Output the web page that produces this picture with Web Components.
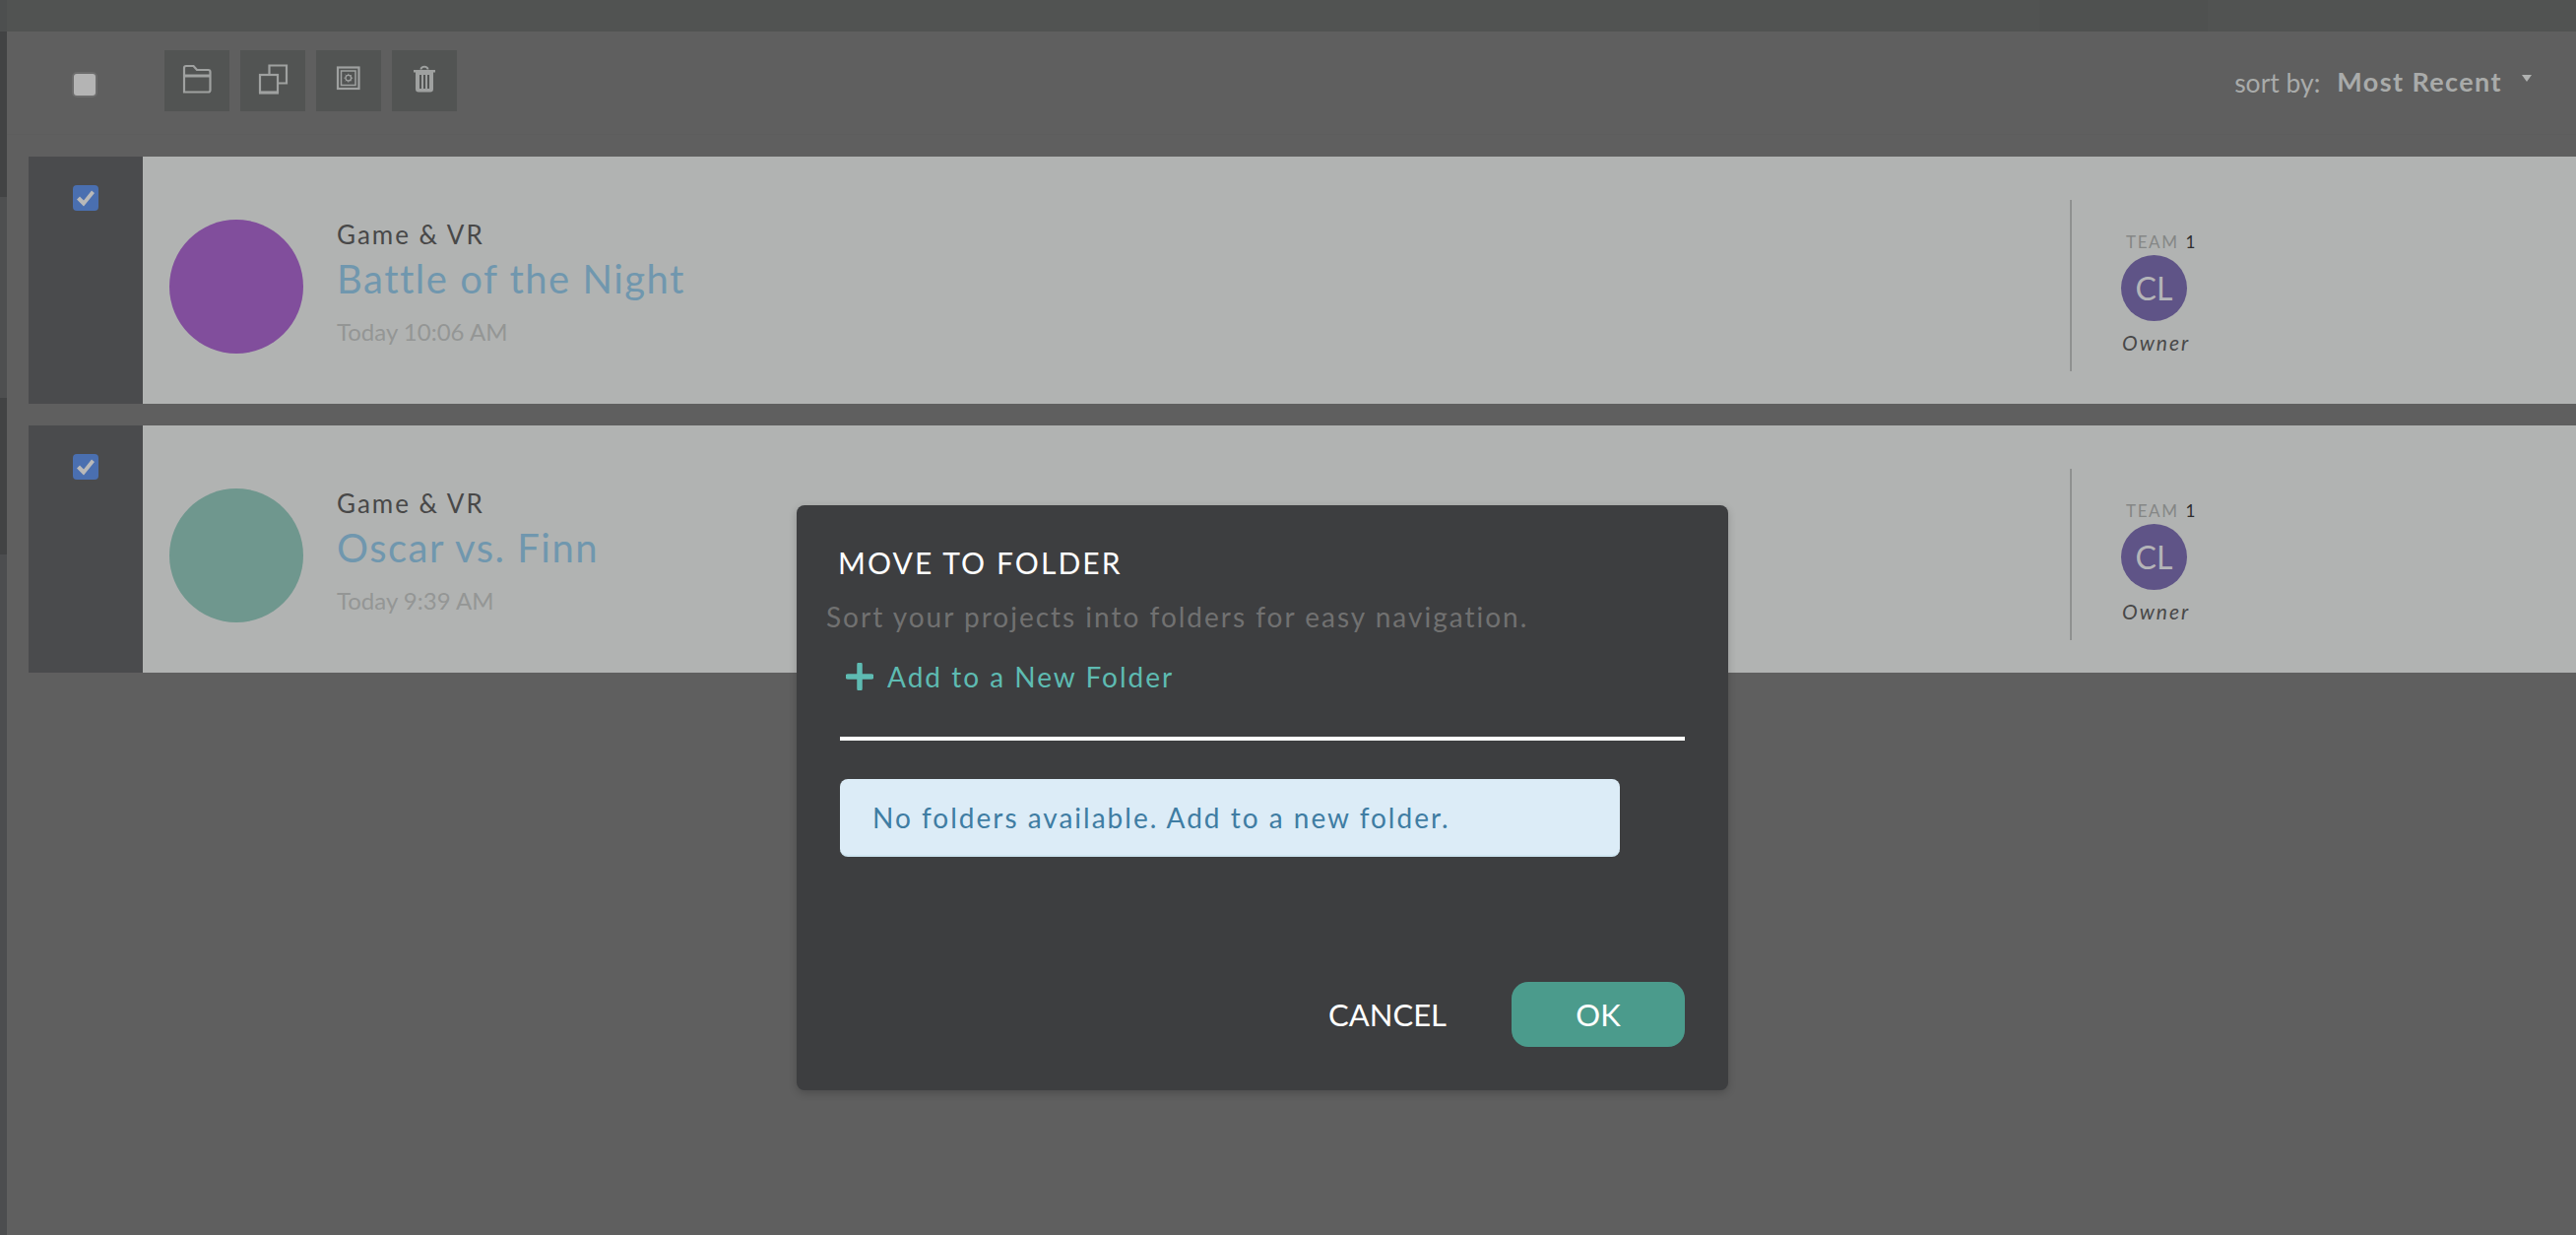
<!DOCTYPE html>
<html>
<head>
<meta charset="utf-8">
<title>Move to folder</title>
<style>
  html, body { margin: 0; padding: 0; background: #5f5f5f; }
  body { font-family: Lato, "Open Sans", sans-serif; }
</style>
</head>
<body>
<project-page>
  <tool-bar slot="toolbar">
    <icon-button>
      <svg width="66" height="62" viewBox="0 0 66 62" fill="none" stroke="#9fa1a0" stroke-width="2.2"><path d="M20 42.500V18a2 2 0 0 1 2-2h7.500l3.500 4h11.500a2 2 0 0 1 2 2V40.500a2 2 0 0 1-2 2z"/><path d="M20 26h26.500" stroke-width="3"/></svg>
    </icon-button>
    <icon-button>
      <svg width="66" height="62" viewBox="0 0 66 62" fill="none" stroke="#9fa1a0" stroke-width="2.2"><path d="M29.500 24v-8.500h17.500v18h-8"/><rect x="20" y="25" width="18" height="17.500"/><path d="M19 43.500h20"/></svg>
    </icon-button>
    <icon-button>
      <svg width="66" height="62" viewBox="0 0 66 62" fill="none" stroke="#9fa1a0"><rect x="22" y="17.500" width="21.500" height="21.500" stroke-width="2.2"/><rect x="25.500" y="21" width="14.500" height="14.500" stroke-width="1.500"/><circle cx="32.800" cy="28.200" r="2.800" stroke-width="1.300"/><path d="M32.800 23.800v1.200M32.800 31.500v1.200M28.400 28.200h1.200M36 28.200h1.200M29.700 25l.8.8M35.200 30.500l.8.8M36 25l-.8.800M30.500 30.500l-.8.800" stroke-width="1"/></svg>
    </icon-button>
    <icon-button>
      <svg width="66" height="62" viewBox="0 0 66 62"><path fill="#9fa1a0" d="M22 20h22v2.500H42V39.500a3 3 0 0 1-3 3H27a3 3 0 0 1-3-3V22.500h-2zM28.500 19.500c0-5 9-5 9 0h-2c0-2.200-5-2.200-5 0z"/><path stroke="#525453" stroke-width="2" d="M29 25v14M33 25v14M37 25v14"/></svg>
    </icon-button>
  </tool-bar>

  <project-row slot="rows" category="Game &amp; VR" name="Battle of the Night" time="Today 10:06 AM" tint="#814e9c"></project-row>
  <project-row slot="rows" category="Game &amp; VR" name="Oscar vs. Finn" time="Today 9:39 AM" tint="#6f978e"></project-row>

  <move-dialog slot="dialog"></move-dialog>
</project-page>

<script>
  class ProjectPage extends HTMLElement {
    constructor() {
      super();
      this.attachShadow({ mode: 'open' });
    }

    connectedCallback() {
      this.shadowRoot.innerHTML = `
        <style>
          :host {
            display: block;
            position: relative;
            height: 1254px;
            overflow: hidden;
            background: #5f5f5f;
          }
          .frame { display: flex; height: 100%; }
          .edge { width: 7px; flex: none; display: flex; flex-direction: column; }
          .edge div { flex: none; }
          .edge .a { height: 32px; background: #4d4f4f; }
          .edge .b { height: 168px; background: #424344; }
          .edge .c { height: 204px; background: #4e4f50; }
          .edge .d { height: 159px; background: #424344; }
          .edge .e { flex: 1; background: #4c4d4f; }
          .main { flex: 1; min-width: 0; display: flex; flex-direction: column; }
          .top { height: 32px; background: #515352; display: flex; justify-content: flex-end; }
          .top span { width: 171px; margin-right: 374px; background: #4f5150; }
          .rows {
            display: flex;
            flex-direction: column;
            gap: 22px;
            padding: 22px 0 0 22px;
          }
        </style>
        <div class="frame">
          <div class="edge"><div class="a"></div><div class="b"></div><div class="c"></div><div class="d"></div><div class="e"></div></div>
          <div class="main">
            <div class="top"><span></span></div>
            <slot name="toolbar"></slot>
            <div class="rows"><slot name="rows"></slot></div>
          </div>
        </div>
        <slot name="dialog"></slot>
      `;
    }
  }

  class ToolBar extends HTMLElement {
    constructor() {
      super();
      this.attachShadow({ mode: 'open' });
    }

    connectedCallback() {
      this.shadowRoot.innerHTML = `
        <style>
          :host {
            display: flex;
            align-items: flex-start;
            height: 105px;
            box-sizing: border-box;
            border-bottom: 1px solid #5d5d5d;
            padding-top: 19px;
            color: #a9abaa;
          }
          .check {
            width: 26px;
            height: 26px;
            box-sizing: border-box;
            margin: 22px 68px 0 66px;
            background: #b4b4b4;
            border: 2px solid #6c6c6c;
            border-radius: 5px;
          }
          .buttons { display: flex; gap: 11px; }
          .sort {
            margin-left: auto;
            display: flex;
            align-items: baseline;
            padding: 15px 75px 0 0;
            position: relative;
          }
          .label { font-size: 26.500px; margin-right: 17px; position: relative; top: 1px; }
          .value { font-size: 27px; font-weight: 700; letter-spacing: 1.4px; }
          .caret {
            position: absolute;
            right: 45px;
            top: 25px;
            border: 5px solid transparent;
            border-top: 7px solid #b0b2b1;
            border-bottom: 0;
          }
        </style>
        <div class="check"></div>
        <div class="buttons"><slot></slot></div>
        <div class="sort">
          <span class="label">sort by:</span>
          <span class="value">Most Recent</span>
          <span class="caret"></span>
        </div>
      `;
    }
  }

  class IconButton extends HTMLElement {
    constructor() {
      super();
      this.attachShadow({ mode: 'open' });
    }

    connectedCallback() {
      this.shadowRoot.innerHTML = `
        <style>
          :host {
            display: block;
            width: 66px;
            height: 62px;
            background: #525453;
            line-height: 0;
          }
        </style>
        <slot></slot>
      `;
    }
  }

  class ProjectRow extends HTMLElement {
    constructor() {
      super();
      this.attachShadow({ mode: 'open' });
    }

    connectedCallback() {
      const category = this.getAttribute('category');
      const name = this.getAttribute('name');
      const time = this.getAttribute('time');
      const tint = this.getAttribute('tint');
      this.shadowRoot.innerHTML = `
        <style>
          :host { display: flex; height: 251px; background: #b1b3b2; }
          .side { width: 116px; flex: none; background: #4a4b4d; display: flex; justify-content: center; padding-top: 29px; box-sizing: border-box; }
          .check {
            width: 26px;
            height: 26px;
            border-radius: 4px;
            background: #4a6fb0;
          }
          .check svg { display: block; }
          .body { flex: 1; display: flex; align-items: flex-start; padding: 64px 0 0 27px; min-width: 0; }
          .thumb { width: 136px; height: 136px; border-radius: 50%; background: ${tint}; flex: none; }
          .info { width: 1794px; padding-left: 34px; box-sizing: border-box; }
          .category { font-size: 26px; line-height: 30px; color: #484848; letter-spacing: 2px; }
          .name { font-size: 40px; line-height: 50px; margin-top: 5px; color: #7097ae; letter-spacing: 1.5px; }
          .time { font-size: 24px; line-height: 30px; margin-top: 14px; color: #949695; }
        </style>
        <div class="side">
          <div class="check">
            <svg width="26" height="26" viewBox="0 0 26 26"><path d="M4 14.500l3-3 4 4 8-10 3 2.500-11 13.500z" fill="#b9b9b9"/></svg>
          </div>
        </div>
        <div class="body">
          <div class="thumb"></div>
          <div class="info">
            <div class="category">${category.replace('&', '&amp;')}</div>
            <div class="name">${name}</div>
            <div class="time">${time}</div>
          </div>
          <team-block initials="CL" count="1" role="Owner"></team-block>
        </div>
      `;
    }
  }

  class TeamBlock extends HTMLElement {
    constructor() {
      super();
      this.attachShadow({ mode: 'open' });
    }

    connectedCallback() {
      this.shadowRoot.innerHTML = `
        <style>
          :host {
            display: block;
            height: 174px;
            margin-top: -20px;
            padding-left: 50px;
            border-left: 2px solid #8f9190;
            box-sizing: border-box;
          }
          .label { font-size: 17px; line-height: 20px; margin: 33px 0 0 5px; color: #858786; letter-spacing: 1.600px; white-space: nowrap; }
          .label b { font-weight: 400; color: #2e2e2e; margin-left: 1px; }
          .avatar {
            width: 67px;
            height: 67px;
            margin-top: 3px;
            border-radius: 50%;
            background: #5f5487;
            color: #b4b4b8;
            font-size: 32px;
            display: flex;
            align-items: center;
            justify-content: center;
          }
          .role { font-size: 21px; line-height: 26px; margin: 9px 0 0 1px; font-style: italic; color: #484848; letter-spacing: 2px; }
        </style>
        <div class="label">TEAM <b>${this.getAttribute('count')}</b></div>
        <div class="avatar">${this.getAttribute('initials')}</div>
        <div class="role">${this.getAttribute('role')}</div>
      `;
    }
  }

  class MoveDialog extends HTMLElement {
    constructor() {
      super();
      this.attachShadow({ mode: 'open' });
    }

    connectedCallback() {
      this.shadowRoot.innerHTML = `
        <style>
          :host {
            position: absolute;
            left: 809px;
            top: 513px;
            width: 946px;
            height: 594px;
            box-sizing: border-box;
            padding: 38px 44px 44px 44px;
            display: flex;
            flex-direction: column;
            background: #3d3e40;
            border-radius: 8px;
            box-shadow: 0 3px 8px rgba(0,0,0,.2);
          }
          .title { font-size: 30px; line-height: 40px; color: #fff; letter-spacing: 2.1px; margin-left: -2px; }
          .hint { font-size: 28px; line-height: 34px; margin: 18px 0 0 -14px; color: #717171; letter-spacing: 2px; white-space: nowrap; }
          .add { display: flex; align-items: center; gap: 14px; margin: 22px 0 0 6px; height: 44px; color: #5ebbb2; font-size: 28px; letter-spacing: 2px; }
          .add svg { flex: none; }
          .line { height: 4px; background: #fff; margin-top: 39px; }
          .notice {
            width: 792px;
            height: 79px;
            box-sizing: border-box;
            margin-top: 39px;
            padding: 0 33px;
            display: flex;
            align-items: center;
            background: #dcecf7;
            border-bottom: 2px solid #cfe6f1;
            border-radius: 8px;
            color: #3f7da3;
            font-size: 28px;
            letter-spacing: 2px;
          }
          .actions { margin-top: auto; display: flex; justify-content: flex-end; align-items: center; gap: 66px; }
          .cancel { font-size: 31px; color: #fff; }
          .ok {
            width: 176px;
            height: 66px;
            display: flex;
            align-items: center;
            justify-content: center;
            border-radius: 17px;
            background: #4b9b8c;
            color: #fff;
            font-size: 31px;
          }
        </style>
        <div class="title">MOVE TO FOLDER</div>
        <div class="hint">Sort your projects into folders for easy navigation.</div>
        <div class="add">
          <svg width="28" height="28" viewBox="0 0 28 28"><path d="M14 2v24M2 14h24" stroke="#5ebbb2" stroke-width="5.500" stroke-linecap="round"/></svg>
          <span>Add to a New Folder</span>
        </div>
        <div class="line"></div>
        <div class="notice">No folders available. Add to a new folder.</div>
        <div class="actions">
          <span class="cancel">CANCEL</span>
          <span class="ok">OK</span>
        </div>
      `;
    }
  }

  customElements.define('project-page', ProjectPage);
  customElements.define('tool-bar', ToolBar);
  customElements.define('icon-button', IconButton);
  customElements.define('project-row', ProjectRow);
  customElements.define('team-block', TeamBlock);
  customElements.define('move-dialog', MoveDialog);
</script>
</body>
</html>
